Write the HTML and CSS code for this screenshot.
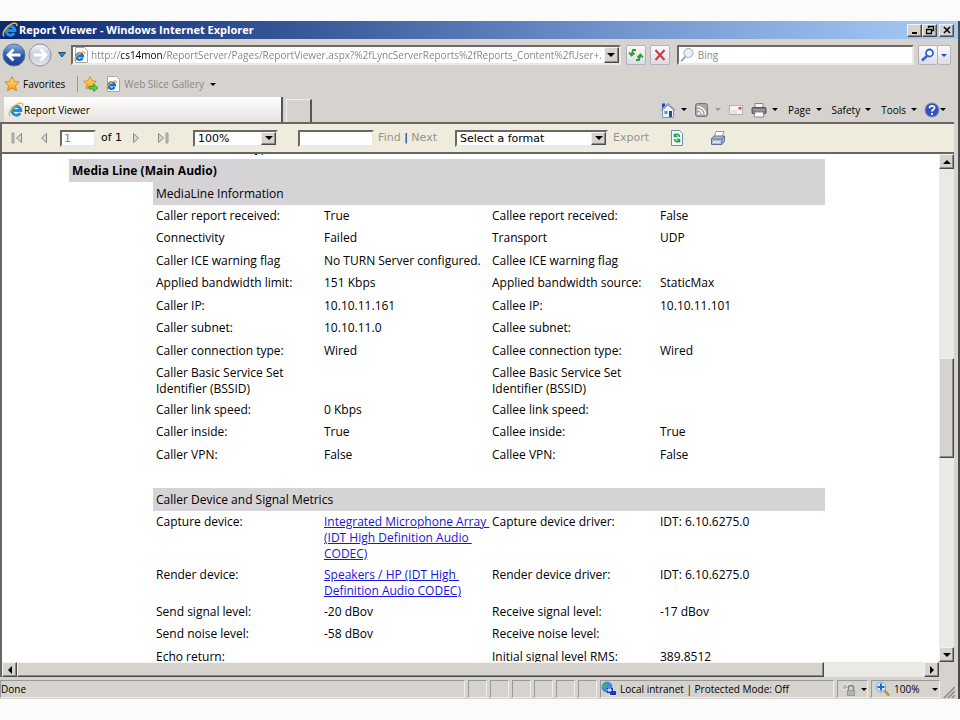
FILE: index.html
```html
<!DOCTYPE html>
<html lang="en">
<head>
<meta charset="utf-8">
<title>Report Viewer - Windows Internet Explorer</title>
<link rel="stylesheet" href="styles.css">
</head>
<body>
<svg class="defs" aria-hidden="true">
  <defs>
    <linearGradient id="blue" x1="0" y1="0" x2="0" y2="1"><stop offset="0" stop-color="#8fb2e6"/><stop offset=".5" stop-color="#2a5cb4"/><stop offset="1" stop-color="#1c3f94"/></linearGradient>
    <linearGradient id="pale" x1="0" y1="0" x2="0" y2="1"><stop offset="0" stop-color="#f6f8fb"/><stop offset=".5" stop-color="#c3cbdb"/><stop offset="1" stop-color="#e4e9f2"/></linearGradient>
    <linearGradient id="gold" x1="0" y1="0" x2="0" y2="1"><stop offset="0" stop-color="#ffe88a"/><stop offset="1" stop-color="#f59a10"/></linearGradient>
    <symbol id="ie" viewBox="0 0 16 16">
      <path d="M12.2 11A4.400 4.400 0 1 1 12.800 8.600H5" fill="none" stroke="#1f8fe6" stroke-width="3"/>
      <path d="M2.200 14.200C-.6 12 3.400 5 8.600 2.400 12.200.6 15.400.6 14.700 4" fill="none" stroke="#f2bb2c" stroke-width="1.500"/>
    </symbol>
    <symbol id="iepage" viewBox="0 0 16 16">
      <path d="M2.500.5h9l3 3v12h-12z" fill="#fff" stroke="#a4a8b0"/>
      <path d="M9.600 11.200A3.300 3.300 0 1 1 10 9.300H4" fill="none" stroke="#1f6fd0" stroke-width="2.400"/>
      <path d="M2.200 14C.5 12 4 7.500 7.500 5.600 10 4.400 12 4.400 11.500 6.800" fill="none" stroke="#e8b030" stroke-width="1.200"/>
    </symbol>
    <symbol id="star" viewBox="0 0 16 16"><path d="M8 .8l2.200 4.700 5 .6-3.700 3.500 1 5.100L8 12.200l-4.500 2.500 1-5.100L.8 6.100l5-.6z" fill="url(#gold)" stroke="#d98a12"/></symbol>
  </defs>
</svg>
<div class="window">
  <header class="titlebar">
    <svg class="i16"><use href="#ie"/></svg>
    <h1>Report Viewer - Windows Internet Explorer</h1>
    <div class="caption-buttons">
      <button class="raised" aria-label="Minimize"><svg viewBox="0 0 12 10"><path d="M3 8h5" stroke="#000" stroke-width="2"/></svg></button>
      <button class="raised" aria-label="Restore"><svg viewBox="0 0 12 10"><path d="M4.500 3V1.500h5v4H8M4 1.500h6M2.500 4.500h5v4h-5zM2 4.500h6" fill="none" stroke="#000" stroke-width="1.300"/></svg></button>
      <button class="raised close" aria-label="Close"><svg viewBox="0 0 12 10"><path d="M3 2l6 6M9 2L3 8" stroke="#000" stroke-width="1.600"/></svg></button>
    </div>
  </header>

  <div class="navbar">
    <div class="history">
      <button aria-label="Back"><svg viewBox="0 0 24 24"><circle cx="12" cy="12" r="11" fill="url(#blue)" stroke="#5b6f94"/><path d="M18.500 12H7M11.500 6.500L6 12l5.500 5.500" fill="none" stroke="#fff" stroke-width="2.800"/></svg></button>
      <button aria-label="Forward"><svg viewBox="0 0 24 24"><circle cx="12" cy="12" r="11" fill="url(#pale)" stroke="#8a93a6"/><path d="M5.500 12H17M12.500 6.500L18 12l-5.500 5.500" fill="none" stroke="#fff" stroke-width="2.800"/></svg></button>
      <button class="recent" aria-label="Recent pages"><svg viewBox="0 0 8 6"><path d="M.5.500h7L4 5z" fill="#2b8bc6" stroke="#1b4f80"/></svg></button>
    </div>
    <div class="address sunken">
      <svg class="i16"><use href="#iepage"/></svg>
      <input class="url" type="text" aria-label="Address" value="http://cs14mon/ReportServer/Pages/ReportViewer.aspx?%2fLyncServerReports%2fReports_Content%2fUser+.">
      <button class="raised drop" aria-label="Address list"><i class="arrow"></i></button>
    </div>
    <button class="glass reload" aria-label="Refresh"><svg viewBox="0 0 16 16"><path d="M8 3H5l-1.500 5M1 5.500L3.500 8.500l3-2.500M8 13h3l1.500-5M9.500 10.500l3-3L15 10.500" fill="none" stroke="#27a02c" stroke-width="1.800"/></svg></button>
    <button class="glass" aria-label="Stop"><svg viewBox="0 0 16 16"><path d="M3.500 3l9 10M12.500 3l-9 10" stroke="#cf3a40" stroke-width="2"/></svg></button>
    <div class="search sunken">
      <svg class="i16" viewBox="0 0 16 16"><path d="M7 9l-5 5.500" stroke="#8e99a6" stroke-width="1.800"/><circle cx="9.500" cy="6" r="4.500" fill="#e6f3fb" stroke="#93a8b8"/></svg>
      <input type="text" aria-label="Search" placeholder="Bing">
    </div>
    <div class="search-go">
      <button class="glass" aria-label="Go"><svg viewBox="0 0 16 16"><path d="M7 9l-5 4.500" stroke="#2f5fd8" stroke-width="2.400"/><circle cx="9.500" cy="6" r="3.500" fill="#fff" stroke="#2f5fd8" stroke-width="1.800"/></svg></button>
      <button class="glass slim" aria-label="Search options"><i class="arrow blue"></i></button>
    </div>
  </div>

  <div class="favbar">
    <button><svg class="i16"><use href="#star"/></svg>Favorites</button>
    <button class="addfav" aria-label="Add to favorites bar"><svg class="i16" viewBox="0 0 16 16"><use href="#star" width="14" height="14"/><path d="M6 10.500h4.500V8l4.500 4-4.500 3.500V13H6z" fill="#5fd04a" stroke="#3ba02c"/></svg></button>
    <button class="dim"><svg class="i16"><use href="#iepage"/></svg>Web Slice Gallery<i class="arrow"></i></button>
  </div>

  <div class="tabrow">
    <a class="tab" href="#"><svg class="i16"><use href="#ie"/></svg>Report Viewer</a>
    <button class="newtab" aria-label="New tab"></button>
    <nav class="commands">
      <button aria-label="Home"><svg class="i16" viewBox="0 0 16 16"><path d="M2 1.500h3v5H2z" fill="#2b3fc4"/><path d="M2.500 8v7.500h11V8L8 3z" fill="#eef3fa" stroke="#8494ac"/><path d="M.8 8.500L8 1.800l7.200 6.700" fill="none" stroke="#8ba3c8" stroke-width="1.600"/><path d="M9 9h3v6H9z" fill="#2b4a94"/><path d="M4.500 9h3v3h-3z" fill="#35a0dc"/></svg><i class="arrow"></i></button>
      <button aria-label="Feeds" class="feeds"><svg class="i16" viewBox="0 0 16 16"><rect x="1.500" y="1.500" width="12" height="13" rx="2" fill="#a6a6a6" stroke="#747474" /><circle cx="4.800" cy="11.500" r="1.300" fill="#fff"/><path d="M3.500 7.500a5 5 0 0 1 5 5M3.500 4.500a8 8 0 0 1 8 8" fill="none" stroke="#fff" stroke-width="1.500"/></svg><i class="arrow faded"></i></button>
      <button aria-label="Read mail"><svg class="i16" viewBox="0 0 16 16"><rect x="1.500" y="3.500" width="13" height="9" fill="#f6f4f4" stroke="#b4b0b0"/><path d="M3 9h6M3 11h6" stroke="#d4d0d4"/><path d="M10.500 5h3v2.500h-3z" fill="#d84848"/></svg></button>
      <button aria-label="Print"><svg class="i16" viewBox="0 0 16 16"><path d="M4 1.500h8V6H4z" fill="#f4f4f4" stroke="#888"/><rect x="1" y="5.500" width="14" height="6" rx="1" fill="#777" stroke="#555"/><path d="M2 8h12" stroke="#bbb"/><path d="M4 10h8l1 5H3z" fill="#fff" stroke="#888"/></svg><i class="arrow"></i></button>
      <button class="menu">Page<i class="arrow"></i></button>
      <button class="menu">Safety<i class="arrow"></i></button>
      <button class="menu">Tools<i class="arrow"></i></button>
      <button aria-label="Help" class="help"><svg class="i16" viewBox="0 0 16 16"><circle cx="8" cy="8" r="7" fill="#3152b8" stroke="#7a8fc8"/><path d="M5.500 6.200C5.600 3 10.800 3.200 10.500 6 10.300 7.600 8 7.600 8 9.600M8 11v2" fill="none" stroke="#fff" stroke-width="1.800"/></svg><i class="arrow"></i></button>
    </nav>
  </div>

  <form class="toolbar">
    <button type="button" class="pager" aria-label="First page"><svg viewBox="0 0 12 12"><path d="M1 1h2v10H1z" fill="#c4c4c4" stroke="#999"/><path d="M10.500 1.500v9L5.500 6z" fill="#d8d8d8" stroke="#888"/></svg></button>
    <button type="button" class="pager" aria-label="Previous page"><svg viewBox="0 0 12 12"><path d="M8.500 1.500v9L3.500 6z" fill="#d8d8d8" stroke="#888"/></svg></button>
    <input class="sunken page" type="text" aria-label="Current page" value="1">
    <span class="of">of 1</span>
    <button type="button" class="pager" aria-label="Next page"><svg viewBox="0 0 12 12"><path d="M3.500 1.500v9l5-4.500z" fill="#d8d8d8" stroke="#888"/></svg></button>
    <button type="button" class="pager last" aria-label="Last page"><svg viewBox="0 0 12 12"><path d="M1.500 1.500v9l5-4.500z" fill="#d8d8d8" stroke="#888"/><path d="M9 1h2v10H9z" fill="#c4c4c4" stroke="#999"/></svg></button>
    <span class="select sunken zoom"><select aria-label="Zoom"><option>100%</option></select><span class="raised drop"><i class="arrow"></i></span></span>
    <input class="sunken find" type="text" aria-label="Find text">
    <span class="links"><a href="#">Find</a> | <a href="#">Next</a></span>
    <span class="select sunken format"><select aria-label="Export format"><option>Select a format</option></select><span class="raised drop"><i class="arrow"></i></span></span>
    <a class="export" href="#">Export</a>
    <button type="button" class="tool" aria-label="Refresh report"><svg class="i16" viewBox="0 0 16 16"><path d="M2.500.5h8l3 3v12h-11z" fill="#f4fafc" stroke="#6d8fae"/><path d="M10.500 7c0-3-3-3.500-4.500-1.500M5.500 3.500v3h3M5.500 9c0 3 3 3.500 4.500 1.500M10.500 12.500v-3h-3" fill="none" stroke="#25a04a" stroke-width="1.600"/></svg></button>
    <button type="button" class="tool" aria-label="Print report"><svg class="i16" viewBox="0 0 16 16"><path d="M6 1.500h8l-2 6H4z" fill="#fff" stroke="#8b9ab4"/><path d="M1.500 8.500L4 6h10.500v5L12 14.500H1.500z" fill="#aebcd4" stroke="#5e7094"/><path d="M1.500 9H12l2.500-3M12 9v5" fill="none" stroke="#5e7094"/><path d="M3 12h7" stroke="#fff"/></svg></button>
  </form>

  <div class="viewport">
    <main class="page-area">
      <div class="report">
        <div class="cut"><span>User connection type:</span></div>
        <h2>Media Line (Main Audio)</h2>
        <table>
          <caption>MediaLine Information</caption>
          <tbody>
          <tr><td>Caller report received:</td><td>True</td><td>Callee report received:</td><td>False</td></tr>
          <tr><td>Connectivity</td><td>Failed</td><td>Transport</td><td>UDP</td></tr>
          <tr><td>Caller ICE warning flag</td><td class="nowrap">No TURN Server configured.</td><td>Callee ICE warning flag</td><td></td></tr>
          <tr><td>Applied bandwidth limit:</td><td>151 Kbps</td><td>Applied bandwidth source:</td><td>StaticMax</td></tr>
          <tr><td>Caller IP:</td><td>10.10.11.161</td><td>Callee IP:</td><td>10.10.11.101</td></tr>
          <tr><td>Caller subnet:</td><td>10.10.11.0</td><td>Callee subnet:</td><td></td></tr>
          <tr><td>Caller connection type:</td><td>Wired</td><td>Callee connection type:</td><td>Wired</td></tr>
          <tr class="multiline"><td>Caller Basic Service Set<br>Identifier (BSSID)</td><td></td><td>Callee Basic Service Set<br>Identifier (BSSID)</td><td></td></tr>
          <tr><td>Caller link speed:</td><td>0 Kbps</td><td>Callee link speed:</td><td></td></tr>
          <tr><td>Caller inside:</td><td>True</td><td>Callee inside:</td><td>True</td></tr>
          <tr><td>Caller VPN:</td><td>False</td><td>Callee VPN:</td><td>False</td></tr>
          </tbody>
        </table>
        <table>
          <caption>Caller Device and Signal Metrics</caption>
          <tbody>
          <tr class="multiline"><td>Capture device:</td><td class="nowrap"><a href="#">Integrated Microphone Array&nbsp;<br>(IDT High Definition Audio&nbsp;<br>CODEC)</a></td><td>Capture device driver:</td><td>IDT: 6.10.6275.0</td></tr>
          <tr class="multiline"><td>Render device:</td><td class="nowrap"><a href="#">Speakers / HP (IDT High&nbsp;<br>Definition Audio CODEC)</a></td><td>Render device driver:</td><td>IDT: 6.10.6275.0</td></tr>
          <tr><td>Send signal level:</td><td>-20 dBov</td><td>Receive signal level:</td><td>-17 dBov</td></tr>
          <tr><td>Send noise level:</td><td>-58 dBov</td><td>Receive noise level:</td><td></td></tr>
          <tr><td>Echo return:</td><td></td><td>Initial signal level RMS:</td><td>389.8512</td></tr>
          </tbody>
        </table>
      </div>
    </main>
    <div class="vscroll">
      <button class="raised" aria-label="Scroll up"><i class="arrow up"></i></button>
      <div class="track"><div class="thumb raised"></div></div>
      <button class="raised" aria-label="Scroll down"><i class="arrow"></i></button>
    </div>
    <div class="hscroll">
      <button class="raised" aria-label="Scroll left"><i class="arrow left"></i></button>
      <div class="track"><div class="thumb raised"></div></div>
      <button class="raised" aria-label="Scroll right"><i class="arrow right"></i></button>
    </div>
  </div>

  <footer class="status">
    <span class="pane grow">Done</span>
    <span class="pane cell"></span><span class="pane cell"></span><span class="pane cell"></span><span class="pane cell"></span><span class="pane cell"></span><span class="pane cell"></span>
    <span class="pane zone"><svg class="i16" viewBox="0 0 16 16"><circle cx="6" cy="6" r="5.500" fill="#3b8fd8"/><path d="M2 3c3-2 4 0 3 2s-3 2-4 1zM6 7c3-2 4 0 3 3H7z" fill="#46b84a"/><path d="M6 7h6v5H6zM9 10h6v5H9z" fill="#1c36c0"/><path d="M7 8h3v2H7zM8 14.500h7" fill="#9ce0fa" stroke="#dfe8f4"/></svg>Local intranet | Protected Mode: Off</span>
    <button class="pane lock" aria-label="Privacy"><svg class="i16" viewBox="0 0 16 16"><path d="M1 7l4-5 2 3 3-3v4L4 9z" fill="#b8b8b8" stroke="#f0f0f0"/><path d="M8.500 9V7a2.500 2.500 0 0 1 5 0v2" fill="none" stroke="#888" stroke-width="1.500"/><path d="M7 9h8v6H7z" fill="#999"/><path d="M8 11h6M8 13h6" stroke="#ccc"/></svg><i class="arrow"></i></button>
    <button class="pane zoomlevel"><svg class="i16" viewBox="0 0 16 16"><path d="M9 9l5 5.500" stroke="#b98a4c" stroke-width="2.500"/><circle cx="6" cy="6" r="4.800" fill="#d4ecfc" stroke="#7aa8d8"/><path d="M6 2.500v7M2.500 6h7" stroke="#2468d0" stroke-width="2"/></svg>100%<i class="arrow"></i></button>
    <svg class="grip" viewBox="0 0 12 12"><path d="M1 12L12 1M5 12l7-7M9 12l3-3" stroke="#888" stroke-width="1.500"/></svg>
  </footer>
</div>
</body>
</html>
```

FILE: styles.css
```css
* { box-sizing: border-box; }

body {
  margin: 0;
  height: 100vh;
  padding: 21px 0;
  background: #fbfbfb;
  color: #000;
  font: 10px/14px "Open Sans", "Noto Sans", sans-serif;
}

button, input, select { font: inherit; color: inherit; margin: 0; }
button { padding: 0; border: 0; background: none; display: flex; align-items: center; }
input, select { border: 0; background: #fff; outline: 0; min-width: 0; }
svg { display: block; flex: none; }
i { flex: none; }
.defs { position: absolute; width: 0; height: 0; }
.i16 { width: 16px; height: 16px; }

.window {
  height: 100%;
  display: flex;
  flex-direction: column;
  background: #d6d3ce;
  border-right: 2px solid #4c4a48;
}

.raised {
  background: #d6d3ce;
  border: 1px solid;
  border-color: #f4f2f0 #4c4a48 #4c4a48 #f4f2f0;
  box-shadow: inset -1px -1px #8c8a86;
  justify-content: center;
}
.sunken {
  background: #fff;
  border: 2px solid;
  border-color: #6a6864 #ece9e4 #ece9e4 #6a6864;
}

.arrow {
  border: 4px solid transparent;
  border-top-color: #000;
  border-bottom: 0;
}
.arrow.up { border: 4px solid transparent; border-bottom-color: #000; border-top: 0; }
.arrow.left { border: 4px solid transparent; border-right-color: #000; border-left: 0; }
.arrow.right { border: 4px solid transparent; border-left-color: #000; border-right: 0; }
.arrow.blue { border-width: 3px 3px 0; border-top-color: #1f4fc4; }
.arrow.faded { border-top-color: #999; }

/* Title bar */
.titlebar {
  flex: none;
  height: 18px;
  display: flex;
  align-items: center;
  gap: 1px;
  padding: 0 4px 0 2px;
  background: linear-gradient(90deg, #0c2a70, #3a5a9c 33%, #7596cf 66%, #a8ccf8);
  color: #fff;
}
.titlebar h1 { flex: 1; margin: 0; font-size: 11px; line-height: 14px; }
.caption-buttons { display: flex; }
.caption-buttons button { width: 15px; height: 13px; }
.caption-buttons svg { width: 12px; height: 10px; }
.caption-buttons .close { margin-left: 2px; }

/* Navigation row */
.navbar {
  flex: none;
  height: 32px;
  display: flex;
  align-items: center;
  gap: 4px;
  padding: 0 7px 0 2px;
}
.history { display: flex; align-items: center; gap: 2px; width: 65px; }
.history svg { width: 24px; height: 24px; }
.history .recent { margin-left: 4px; }
.history .recent svg { width: 8px; height: 6px; }
.address, .search { display: flex; align-items: center; height: 20px; }
.address { flex: 552 1 0; }
.address .url {
  flex: 1;
  height: 14px;
  padding: 0 0 0 2px;
  color: transparent;
  background: linear-gradient(90deg, #808080 31px, #000 31px, #000 73px, #808080 73px);
  -webkit-background-clip: text;
  background-clip: text;
}
.drop { display: flex; align-items: center; width: 15px; height: 16px; flex: none; }
.reload { margin-left: 1px; }
.search { flex: 236 1 0; gap: 3px; margin-left: 3px; }
.search input { flex: 1; height: 14px; padding: 0; }
.search input::placeholder { color: #8a8a8a; opacity: 1; }
.glass {
  width: 20px;
  height: 20px;
  justify-content: center;
  border: 1px solid #b4b2c0;
  border-radius: 2px;
  background: linear-gradient(#fafafc, #dedde6);
}
.glass svg { width: 16px; height: 16px; }
.glass.slim { width: 13px; border-left: 0; }
.search-go { display: flex; }

/* Favorites row */
.favbar {
  flex: none;
  height: 26px;
  display: flex;
  align-items: center;
  padding-left: 4px;
}
.favbar button { gap: 3px; }
.favbar .addfav { margin-left: 12px; padding: 0 6px 0 5px; border-left: 1px solid #999; }
.favbar .dim { color: #8a8884; }
.favbar .arrow { border-width: 3px 3px 0; margin-left: 3px; }

/* Tabs and command bar */
.tabrow { flex: none; display: flex; height: 25px; padding: 0 12px 0 4px; }
.tab {
  flex: 0 1 279px;
  display: flex;
  align-items: center;
  padding-left: 4px;
  border-right: 2px solid #555;
  background: linear-gradient(#fff, #e6e2de);
  color: #000;
  text-decoration: none;
}
.newtab {
  width: 26px;
  margin: 2px 0 0 3px;
  border: 1px solid #eee;
  border-right: 2px solid #555;
  border-bottom: 0;
}
.commands { margin-left: auto; display: flex; align-items: center; gap: 7px; }
.commands button { gap: 5px; }
.commands .arrow { border-width: 3px 3px 0; }
.commands .menu { margin-left: 3px; }
.commands .help { gap: 0; }

/* Report toolbar */
.toolbar {
  flex: none;
  height: 32px;
  margin-right: 4px;
  display: flex;
  align-items: center;
  border: 2px solid #666;
  border-right: 0;
  background: #efecde;
  font: 11px/14px "DejaVu Sans", sans-serif;
  padding-left: 9px;
}
.pager { margin-right: 15px; }
.pager svg { width: 12px; height: 12px; }
.toolbar .sunken { height: 17px; }
.toolbar .page { width: 36px; padding: 0 2px; margin: 0 5px 0 -5px; color: #888; }
.toolbar .of { margin-right: 8px; }
.toolbar .last { margin-right: 24px; }
.select { display: flex; }
.select select { flex: 1; appearance: none; padding: 0 3px; height: 13px; line-height: 13px; }
.select .drop { height: 13px; }
.zoom { width: 85px; }
.find { width: 76px; margin: 0 4px 0 20px; }
.links { white-space: pre; }
.toolbar a { color: #96948a; text-decoration: none; }
.format { width: 153px; margin: 0 5px 0 18px; }
.tool { margin-left: 20px; }
.tool + .tool { margin-left: 25px; }

/* Report area with scroll bars */
.viewport {
  flex: 1;
  min-height: 0;
  margin-right: 4px;
  display: grid;
  grid-template: minmax(0, 1fr) 15px / minmax(0, 1fr) 15px;
  border-left: 2px solid #666;
}
.page-area { overflow: hidden; background: #fff; }
.report {
  margin: 0 114px 0 67px;
  font-size: 12px;
  line-height: 16px;
}
.cut { height: 5px; overflow: hidden; display: flex; align-items: flex-end; padding: 0 0 3px 87px; }
.report h2 {
  margin: 0;
  padding: 4px 3px 3px;
  font-size: 12px;
  line-height: 16px;
  background: #d6d3d6;
}
.report table {
  width: calc(100% - 84px);
  margin: 0 0 22px 84px;
  border-collapse: collapse;
  table-layout: fixed;
}
.report caption { text-align: left; padding: 4px 3px 3px; background: #d6d3d6; }
.report td { width: 25%; padding: 3px; vertical-align: top; }
.report tr:nth-child(even) td { padding-bottom: 4px; }
.report tr.multiline td { padding-bottom: 2px; }
.report .nowrap { white-space: nowrap; padding-right: 0; }
.report a { color: #1a14e0; }

.vscroll, .hscroll { display: flex; }
.vscroll { flex-direction: column; }
.hscroll { grid-row: 2; }
.vscroll button, .hscroll button { width: 15px; height: 15px; flex: none; }
.track { flex: 1; display: flex; background: #ebe9e6; }
.vscroll .track { flex-direction: column; padding-top: 189px; }
.vscroll .thumb { height: 100px; }
.hscroll .thumb { width: 89%; }

/* Status bar */
.status { flex: none; height: 22px; display: flex; gap: 3px; padding: 3px 3px 1px 0; }
.pane {
  display: flex;
  align-items: center;
  gap: 3px;
  border: 1px solid;
  border-color: #999 #f0eeec #f0eeec #999;
}
.grow { flex: 1; }
.cell { width: 19px; }
.zone { width: 234px; }
.lock { width: 31px; gap: 5px; padding-left: 2px; }
.zoomlevel { width: 69px; padding-left: 3px; }
.pane .arrow { border-width: 3px 3px 0; }
.zoomlevel .arrow { margin-left: 10px; }
.grip { width: 12px; height: 12px; align-self: flex-end; }
```
